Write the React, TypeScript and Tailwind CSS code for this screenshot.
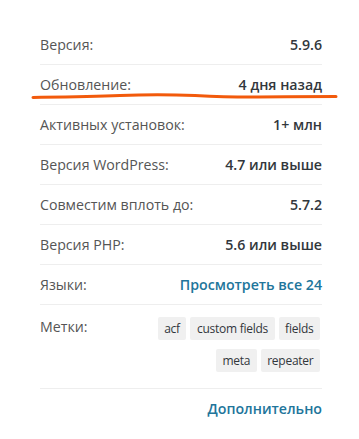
const rows: [string, string][] = [
  ['Версия:', '5.9.6'],
  ['Обновление:', '4 дня назад'],
  ['Активных установок:', '1+ млн'],
  ['Версия WordPress:', '4.7 или выше'],
  ['Совместим вплоть до:', '5.7.2'],
  ['Версия PHP:', '5.6 или выше'],
]

const tags = ['acf', 'custom fields', 'fields', 'meta', 'repeater']

export default function App() {
  return (
    <div className="relative w-[359px] h-[439px] bg-white font-['Open_Sans',sans-serif] text-[14.2px]">
      <div className="ml-10 w-[282px] pt-[25px]">
        {rows.map(([label, value]) => (
          <div key={label} className="flex h-10 items-center justify-between border-b border-[#eeeeee]">
            <span className="text-[#555555]">{label}</span>
            <span className="font-semibold text-[#32373c]">{value}</span>
          </div>
        ))}
        <div className="flex h-10 items-center justify-between border-b border-[#eeeeee]">
          <span className="text-[#555555]">Языки:</span>
          <span className="font-semibold text-[#21759b]">Просмотреть все 24</span>
        </div>
        <div className="flex justify-between border-b border-[#eeeeee] pt-[11px] pb-[16px]">
          <span className="text-[#555555]">Метки:</span>
          <div className="flex w-[180px] flex-wrap justify-end gap-x-[4px] gap-y-[9px] pr-[2px] pt-[1px]">
            {tags.map((t) => (
              <span key={t} className="rounded-[2px] bg-[#f0f0f0] px-[6.5px] py-[2px] text-[12px] leading-[19px] tracking-[-0.25px] text-[#32373c]">
                {t}
              </span>
            ))}
          </div>
        </div>
        <div className="flex justify-end pt-[9px]">
          <span className="font-semibold text-[#21759b]">Дополнительно</span>
        </div>
      </div>
      <svg className="absolute left-0 top-0" width="359" height="439" viewBox="0 0 359 439">
        <path
          d="M33 97.5 C 60 97, 90 96.5, 120 95.5 C 145 94.5, 170 94.5, 195 95.5 C 215 96.5, 230 97, 250 97 C 280 96.5, 310 96.5, 336 96.5"
          fill="none"
          stroke="#f25a0c"
          strokeWidth="3"
          strokeLinecap="round"
        />
      </svg>
    </div>
  )
}
